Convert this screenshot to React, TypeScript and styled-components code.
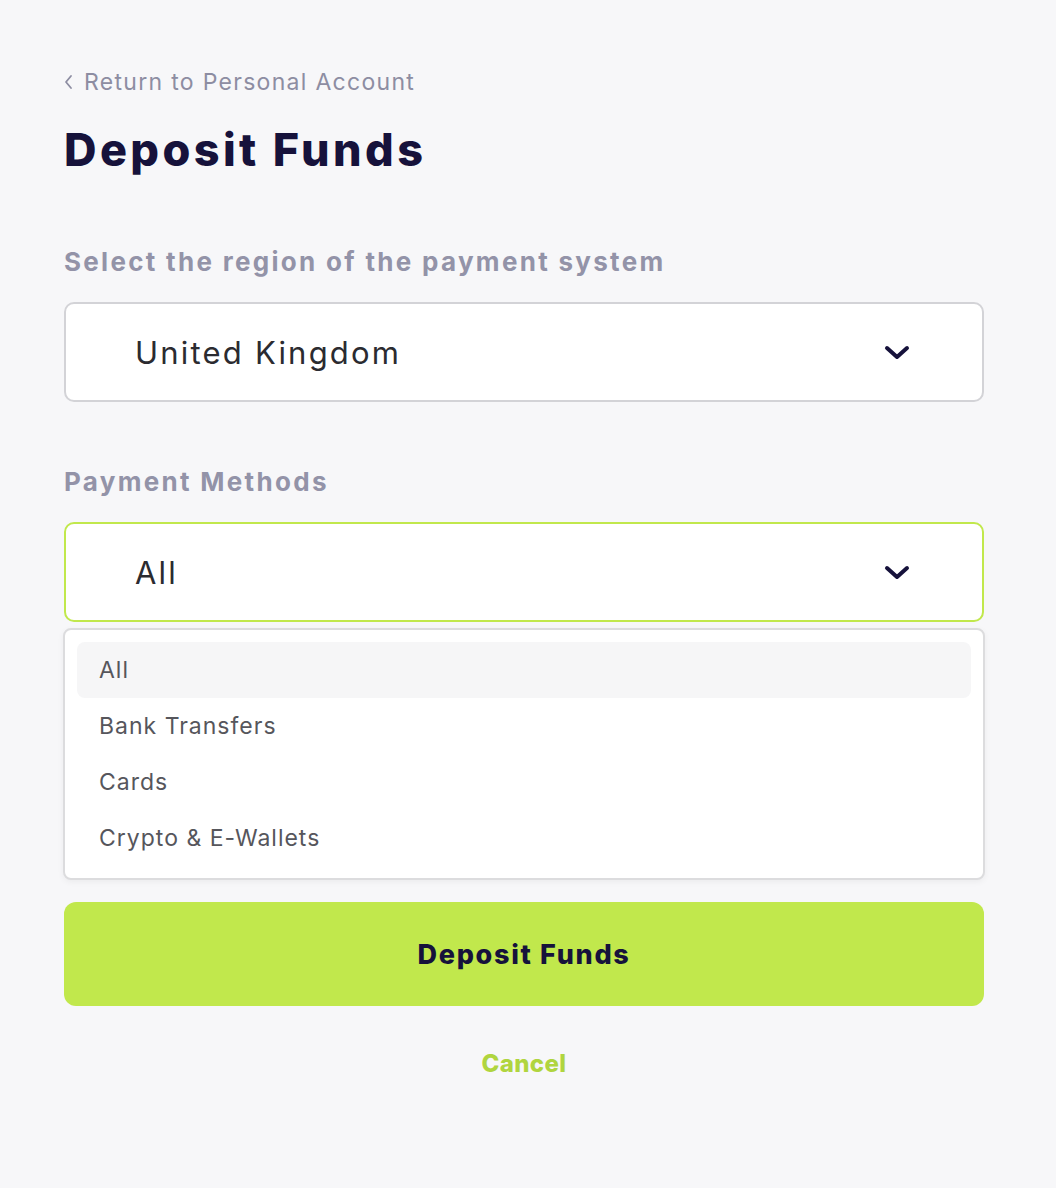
import { useState } from 'react'
import styled, { createGlobalStyle } from 'styled-components'

const GlobalStyle = createGlobalStyle`
  html, body {
    margin: 0;
    padding: 0;
    background: #f7f7f9;
    font-family: Inter, 'Open Sans', sans-serif;
  }
`

const Page = styled.div`
  min-height: 1188px;
  box-sizing: border-box;
  padding: 66px 72px 0 64px;
`

const Panel = styled.div`
  width: 920px;
  display: flex;
  flex-direction: column;
`

const BackLink = styled.a`
  display: flex;
  align-items: center;
  gap: 11px;
  height: 32px;
  font-size: 23px;
  letter-spacing: 1.3px;
  color: #8d8da2;
  text-decoration: none;
  cursor: pointer;
`

const Title = styled.h1`
  margin: 22px 0 0;
  font-size: 45px;
  line-height: 60px;
  font-weight: 800;
  color: #16123b;
  letter-spacing: 3.4px;
`

const Label = styled.div<{ $gap: number }>`
  margin-top: ${(p) => p.$gap}px;
  font-size: 26px;
  line-height: 40px;
  font-weight: 700;
  letter-spacing: 2.3px;
  color: #9393a8;
`

const SelectBox = styled.div<{ $open?: boolean }>`
  margin-top: 20px;
  height: 100px;
  box-sizing: border-box;
  display: flex;
  align-items: center;
  justify-content: space-between;
  padding: 0 72px 0 69px;
  background: #fff;
  border: 2px solid ${(p) => (p.$open ? '#c1e84c' : '#d3d3d7')};
  border-radius: 10px;
  font-size: 31px;
  letter-spacing: 2.2px;
  color: #2b2b30;
  cursor: pointer;
`

const Menu = styled.div`
  margin-top: 6px;
  margin-left: -1px;
  margin-right: -1px;
  padding: 12px;
  background: #fff;
  border: 2px solid #dcdcde;
  border-radius: 8px;
  box-shadow: 0 2px 6px rgba(0, 0, 0, 0.05);
  display: flex;
  flex-direction: column;
`

const MenuItem = styled.div<{ $active?: boolean }>`
  height: 56px;
  display: flex;
  align-items: center;
  padding-left: 22px;
  border-radius: 8px;
  font-size: 23px;
  letter-spacing: 1px;
  color: #56565c;
  background: ${(p) => (p.$active ? '#f6f6f7' : 'transparent')};
  cursor: pointer;
`

const PrimaryButton = styled.button`
  margin-top: 22px;
  height: 104px;
  border: none;
  border-radius: 12px;
  background: #c1e84c;
  color: #16123b;
  font-family: inherit;
  font-size: 27px;
  font-weight: 800;
  letter-spacing: 1.7px;
  cursor: pointer;
`

const CancelButton = styled.button`
  margin-top: 42px;
  align-self: center;
  border: none;
  background: none;
  font-family: inherit;
  font-size: 24px;
  font-weight: 800;
  letter-spacing: 0.4px;
  color: #b0d53f;
  cursor: pointer;
`

const Chevron = () => (
  <svg width="26" height="16" viewBox="0 0 26 16" fill="none">
    <polyline
      points="3,4 13,13 23,4"
      stroke="#16123b"
      strokeWidth="4"
      strokeLinecap="round"
      strokeLinejoin="round"
    />
  </svg>
)

const BackChevron = () => (
  <svg width="9" height="16" viewBox="0 0 9 16" fill="none">
    <polyline points="7,2 2,8 7,14" stroke="#8d8da2" strokeWidth="1.8" strokeLinecap="round" strokeLinejoin="round" />
  </svg>
)

const methods = ['All', 'Bank Transfers', 'Cards', 'Crypto & E-Wallets']

export default function App() {
  const [method, setMethod] = useState('All')

  return (
    <>
      <GlobalStyle />
      <Page>
        <Panel>
          <BackLink>
            <BackChevron />
            Return to Personal Account
          </BackLink>
          <Title>Deposit Funds</Title>

          <Label $gap={62}>Select the region of the payment system</Label>
          <SelectBox>
            <span>United Kingdom</span>
            <Chevron />
          </SelectBox>

          <Label $gap={60}>Payment Methods</Label>
          <SelectBox $open>
            <span>{method}</span>
            <Chevron />
          </SelectBox>
          <Menu>
            {methods.map((m) => (
              <MenuItem key={m} $active={m === method} onClick={() => setMethod(m)}>
                {m}
              </MenuItem>
            ))}
          </Menu>

          <PrimaryButton>Deposit Funds</PrimaryButton>
          <CancelButton>Cancel</CancelButton>
        </Panel>
      </Page>
    </>
  )
}
